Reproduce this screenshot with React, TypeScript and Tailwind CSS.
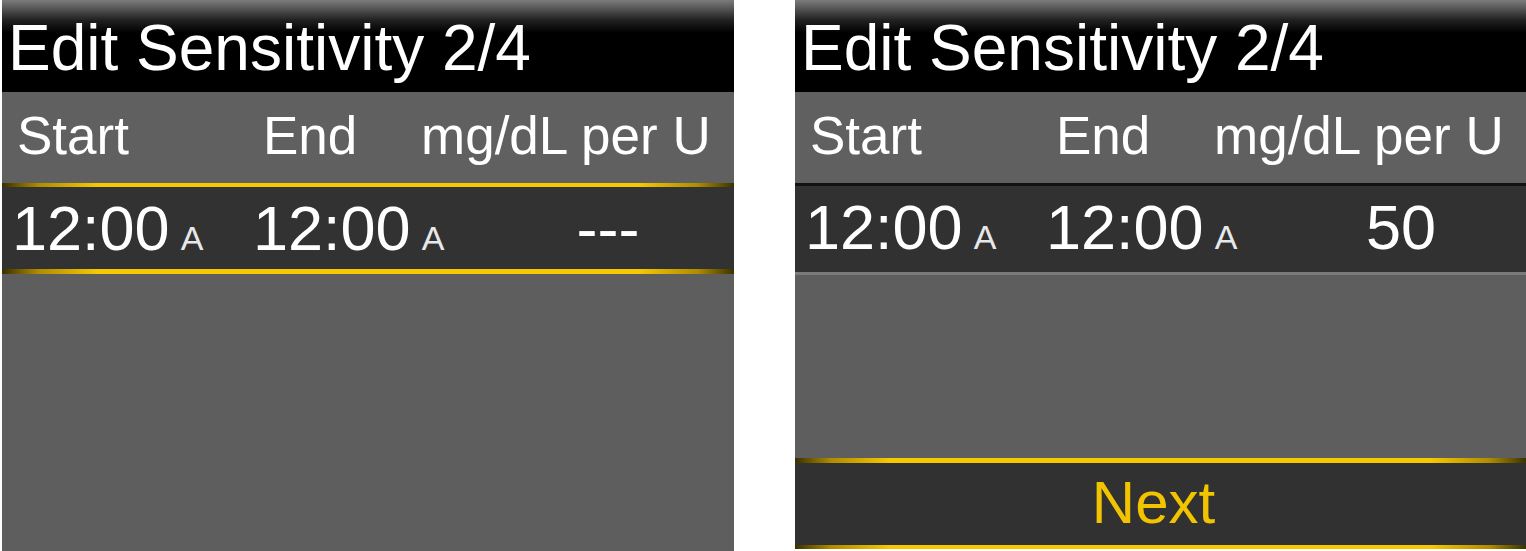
const font = { fontFamily: '"Liberation Sans", Arial, sans-serif' }

function GoldLine({ h = 'h-[4px]' }: { h?: string }) {
  return (
    <div
      className={`${h} w-full bg-[linear-gradient(90deg,#3a3000_0%,#b08c00_5%,#f5c800_13%,#f5c800_87%,#b08c00_95%,#3a3300_100%)]`}
    />
  )
}

function TitleBar() {
  return (
    <div className="h-[92px] bg-[linear-gradient(180deg,#7c7c7c_0%,#202020_22%,#000_36%,#000_100%)] pl-[6px] pt-[16px]">
      <div className="text-[64px] leading-none text-white whitespace-nowrap">Edit Sensitivity 2/4</div>
    </div>
  )
}

function HeaderRow() {
  return (
    <div className="h-[91px] bg-[#606060] pt-[17px] flex text-[53px] leading-none text-white whitespace-nowrap">
      <div className="w-[261px] pl-[15px]">Start</div>
      <div className="w-[158px]">End</div>
      <div>mg/dL per U</div>
    </div>
  )
}

function Time() {
  return (
    <div className="flex items-baseline gap-[11px]">
      <span className="text-[63px] leading-none">12:00</span>
      <span className="text-[34px] leading-none font-light text-[#e8e8e8]">A</span>
    </div>
  )
}

function ValueRow({ value }: { value: string }) {
  return (
    <div className="h-full flex items-start pt-[10px] text-white whitespace-nowrap">
      <div className="w-[251px] pl-[10px]">
        <Time />
      </div>
      <div className="w-[270px]">
        <Time />
      </div>
      <div className="w-[170px] text-center text-[63px] leading-none">{value}</div>
    </div>
  )
}

export default function App() {
  return (
    <div className="w-[1526px] h-[551px] bg-white flex" style={font}>
      {/* first screen: row selected */}
      <div className="ml-[2px] w-[732px] h-[551px] flex flex-col bg-[#5e5e5e]">
        <TitleBar />
        <HeaderRow />
        <GoldLine />
        <div className="h-[82px] bg-[#323232]">
          <ValueRow value="---" />
        </div>
        <GoldLine h="h-[5px]" />
        <div className="flex-1 bg-[#5e5e5e]" />
      </div>

      {/* second screen: Next selected */}
      <div className="ml-[61px] w-[731px] h-[549px] flex flex-col bg-[#5e5e5e]">
        <TitleBar />
        <HeaderRow />
        <div className="h-[3px] bg-[#111]" />
        <div className="h-[86px] bg-[#313131]">
          <ValueRow value="50" />
        </div>
        <div className="h-[3px] bg-[#7a7a7a]" />
        <div className="flex-1 bg-[#5e5e5e]" />
        <GoldLine h="h-[5px]" />
        <div className="h-[82px] bg-[#313131] flex justify-center pt-[10px] pr-[14px]">
          <span className="text-[60px] leading-none text-[#f2c400]">Next</span>
        </div>
        <GoldLine />
      </div>
    </div>
  )
}
